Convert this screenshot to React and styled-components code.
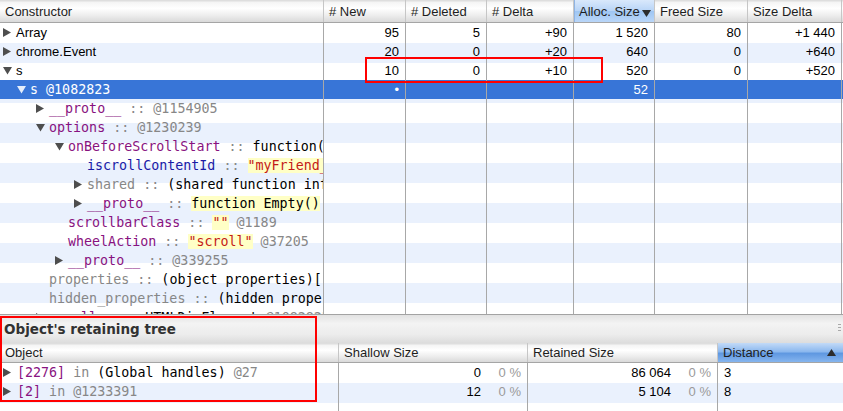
import React from 'react';
import styled, { createGlobalStyle, css } from 'styled-components';

const SANS = `"Liberation Sans", Arial, sans-serif`;
const MONO = `"DejaVu Sans Mono", "Liberation Mono", monospace`;

const GlobalStyle = createGlobalStyle`
  html, body { margin: 0; padding: 0; background: #fff; overflow: hidden; }
  body { font-family: ${SANS}; font-size: 13px; color: #000; }
  #root { width: 843px; height: 411px; }
`;

const TOP_COLS = '324px 82px 81px 87px 81px 93px 94px 1fr';
const BOTTOM_COLS = '339px 189px 190px 1fr';
const INDENT = [3, 17, 36, 55, 74];

const Page = styled.div`
  position: relative;
  width: 843px;
  height: 411px;
  display: flex;
  flex-direction: column;
  overflow: hidden;
`;

const TopGrid = styled.section`
  flex: none;
  height: 315px;
  box-sizing: border-box;
  border-bottom: 1px solid #a3a3a3;
  display: flex;
  flex-direction: column;
  overflow: hidden;
`;

const HeaderRow = styled.div`
  flex: none;
  display: grid;
  grid-template-columns: ${p => p.$cols};
  height: ${p => p.$h}px;
  box-sizing: border-box;
  border-bottom: 1px solid #a5a5a5;
  background: linear-gradient(to bottom, #dedede 0, #dedede 1px, #f4f4f4 2px, #ffffff 38%, #ececec 72%, #d9d9d9 100%);
`;

const sortedLight = css`
  background: linear-gradient(to bottom, #d9e8fb 0%, #b9d5f7 48%, #9fc6f3 52%, #b9d6f8 100%);
  box-shadow: inset 1px 0 0 #8fb4e4;
`;

const sortedStrong = css`
  background: linear-gradient(to bottom, #c2daf7 0%, #8cb8ee 45%, #5f98e1 55%, #86b5ee 100%);
`;

const HeaderCell = styled.div`
  position: relative;
  display: flex;
  align-items: center;
  padding: 0 5px;
  box-sizing: border-box;
  border-right: 1px solid ${p => (p.$last ? 'transparent' : '#c6c6c6')};
  font-family: ${SANS};
  font-size: 13px;
  color: #1e1e1e;
  white-space: nowrap;
  overflow: hidden;
  ${p => p.$sorted === 'light' && sortedLight}
  ${p => p.$sorted === 'strong' && sortedStrong}
`;

const SortMark = styled.svg`
  position: absolute;
  right: ${p => p.$right}px;
  top: ${p => p.$top}px;
  fill: #2c2c2c;
`;

const Body = styled.div`
  flex: 1;
  display: flex;
  flex-direction: column;
  overflow: hidden;
  background: repeating-linear-gradient(to bottom, #ffffff 0, #ffffff 20px, #eaf1fd 20px, #eaf1fd 40px);
`;

const Row = styled.div`
  flex: ${p => (p.$fill ? '1' : 'none')};
  display: grid;
  grid-template-columns: ${p => p.$cols};
  height: ${p => (p.$fill ? 'auto' : '19px')};
  background: ${p => (p.$selected ? '#3875d7' : 'transparent')};
  color: ${p => (p.$selected ? '#fff' : '#000')};
`;

const Cell = styled.div`
  display: flex;
  align-items: center;
  justify-content: ${p => (p.$align === 'left' ? 'flex-start' : 'flex-end')};
  padding: 0 6px;
  box-sizing: border-box;
  border-right: 1px solid ${p => (p.$last ? 'transparent' : '#a8a8a8')};
  font-family: ${SANS};
  font-size: 13px;
  white-space: nowrap;
  overflow: hidden;
`;

const TreeCell = styled.div`
  display: flex;
  align-items: center;
  padding-left: ${p => p.$indent}px;
  box-sizing: border-box;
  border-right: 1px solid #a8a8a8;
  font-family: ${p => (p.$sans ? SANS : MONO)};
  font-size: ${p => (p.$sans ? '13px' : '13.33px')};
  white-space: pre;
  overflow: hidden;
`;

const ToggleBox = styled.span`
  flex: none;
  width: ${p => p.$w}px;
  display: flex;
  align-items: center;
  svg { fill: ${p => (p.$light ? '#e4edfb' : '#4e4e4e')}; }
`;

const NAME_COLORS = { prop: '#881280', closure: '#1a1aa6', internal: '#878787' };

const Name = styled.span`
  color: ${p => (p.$sel ? '#fff' : NAME_COLORS[p.$tone])};
`;

const Sep = styled.span`
  color: ${p => (p.$sel ? '#fff' : '#878787')};
`;

const Val = styled.span`
  color: ${p => (p.$sel ? '#fff' : p.$str ? '#c41a16' : '#000')};
  background: ${p => (p.$hl ? '#ffffc6' : 'transparent')};
`;

const Num = styled.span``;

const Pct = styled.span`
  width: 40px;
  text-align: right;
  color: #9a9a9a;
`;

const TitleBar = styled.div`
  flex: none;
  position: relative;
  height: 28px;
  display: flex;
  align-items: center;
  padding-left: 4px;
  background: linear-gradient(to bottom, #e2e2e2 0%, #f3f3f3 30%, #ececec 70%, #dcdcdc 100%);
  font-family: "DejaVu Sans", "Liberation Sans", sans-serif;
  font-weight: bold;
  font-size: 13.5px;
  color: #323232;
`;

const Grip = styled.svg`
  position: absolute;
  right: 1px;
  top: 9px;
  fill: #a9a9a9;
`;

const RedBox = styled.div`
  position: absolute;
  left: ${p => p.$x}px;
  top: ${p => p.$y}px;
  width: ${p => p.$w}px;
  height: ${p => p.$h}px;
  box-sizing: border-box;
  border: 2px solid #ff0000;
  pointer-events: none;
`;

function Toggle({ dir, light, w = 13 }) {
  return (
    <ToggleBox $w={w} $light={light}>
      {dir === 'right' && (
        <svg width="8" height="9" viewBox="0 0 8 9"><polygon points="0,0 8,4.5 0,9" /></svg>
      )}
      {dir === 'down' && (
        <svg width="9" height="8" viewBox="0 0 9 8"><polygon points="0,0 9,0 4.5,7.5" /></svg>
      )}
    </ToggleBox>
  );
}

function TreeText({ parts, sel }) {
  return parts.map(([kind, text], i) => {
    if (kind === 'prop' || kind === 'closure' || kind === 'internal')
      return <Name key={i} $tone={kind} $sel={sel}>{text}</Name>;
    if (kind === 'sep' || kind === 'id') return <Sep key={i} $sel={sel}>{text}</Sep>;
    if (kind === 'str') return <Val key={i} $str $hl $sel={sel}>{text}</Val>;
    if (kind === 'hl') return <Val key={i} $hl $sel={sel}>{text}</Val>;
    return <Val key={i} $sel={sel}>{text}</Val>;
  });
}

const S = ' :: ';

const topRows = [
  { level: 0, dir: 'right', sans: 'Array', nums: ['95', '5', '+90', '1\u00a0520', '80', '+1\u00a0440'] },
  { level: 0, dir: 'right', sans: 'chrome.Event', nums: ['20', '0', '+20', '640', '0', '+640'] },
  { level: 0, dir: 'down', sans: 's', nums: ['10', '0', '+10', '520', '0', '+520'] },
  { level: 1, dir: 'down', selected: true, parts: [['val', 's'], ['id', ' @1082823']], nums: ['•', '', '', '52', '', ''] },
  { level: 2, dir: 'right', parts: [['prop', '__proto__'], ['sep', S], ['id', '@1154905']] },
  { level: 2, dir: 'down', parts: [['prop', 'options'], ['sep', S], ['id', '@1230239']] },
  { level: 3, dir: 'down', parts: [['prop', 'onBeforeScrollStart'], ['sep', S], ['val', 'function() {}']] },
  { level: 4, parts: [['closure', 'iscrollContentId'], ['sep', S], ['str', '"myFriend_scroll"']] },
  { level: 4, dir: 'right', parts: [['internal', 'shared'], ['sep', S], ['val', '(shared function info)']] },
  { level: 4, dir: 'right', parts: [['prop', '__proto__'], ['sep', S], ['hl', 'function Empty()'], ['val', ' {}']] },
  { level: 3, parts: [['prop', 'scrollbarClass'], ['sep', S], ['str', '""'], ['id', ' @1189']] },
  { level: 3, parts: [['prop', 'wheelAction'], ['sep', S], ['str', '"scroll"'], ['id', ' @37205']] },
  { level: 3, dir: 'right', parts: [['prop', '__proto__'], ['sep', S], ['id', '@339255']] },
  { level: 2, parts: [['internal', 'properties'], ['sep', S], ['val', '(object properties)[]']] },
  { level: 2, parts: [['internal', 'hidden_properties'], ['sep', S], ['val', '(hidden properties)[]']] },
  { level: 2, dir: 'right', parts: [['prop', 'scroller'], ['sep', S], ['val', 'HTMLDivElement'], ['id', ' @1082823']] },
];

const topHeaders = ['Constructor', '# New', '# Deleted', '# Delta', 'Alloc. Size', 'Freed Size', 'Size Delta'];

const bottomRows = [
  { parts: [['prop', '[2276]'], ['id', ' in '], ['val', '(Global handles)'], ['id', ' @27']], shallow: '0', retained: '86\u00a0064', distance: '3' },
  { parts: [['prop', '[2]'], ['id', ' in '], ['id', '@1233391']], shallow: '12', retained: '5\u00a0104', distance: '8' },
];

export default function App() {
  return (
    <Page>
      <GlobalStyle />
      <TopGrid>
        <HeaderRow $cols={TOP_COLS} $h={23}>
          {topHeaders.map(h => (
            <HeaderCell key={h} $sorted={h === 'Alloc. Size' ? 'light' : undefined}>
              {h}
              {h === 'Alloc. Size' && (
                <SortMark $right={3} $top={10} width="9" height="7" viewBox="0 0 9 7">
                  <polygon points="0,0 9,0 4.5,7" />
                </SortMark>
              )}
            </HeaderCell>
          ))}
          <HeaderCell $last />
        </HeaderRow>
        <Body>
          {topRows.map((r, i) => (
            <Row key={i} $cols={TOP_COLS} $selected={r.selected}>
              <TreeCell $indent={INDENT[r.level]} $sans={!!r.sans}>
                <Toggle dir={r.dir} light={r.selected} />
                {r.sans ? r.sans : <TreeText parts={r.parts} sel={r.selected} />}
              </TreeCell>
              {(r.nums || ['', '', '', '', '', '']).map((n, j) => (
                <Cell key={j}>{n}</Cell>
              ))}
              <Cell $last />
            </Row>
          ))}
          <Row $fill $cols={TOP_COLS}>
            <TreeCell $indent={0} />
            {[0, 1, 2, 3, 4, 5].map(j => <Cell key={j} />)}
            <Cell $last />
          </Row>
        </Body>
      </TopGrid>

      <TitleBar>
        Object's retaining tree
        <Grip width="4" height="10" viewBox="0 0 4 10">
          <rect x="0" y="0" width="3" height="1" />
          <rect x="0" y="3" width="3" height="1" />
          <rect x="0" y="6" width="3" height="1" />
        </Grip>
      </TitleBar>
      <HeaderRow $cols={BOTTOM_COLS} $h={20}>
        <HeaderCell>Object</HeaderCell>
        <HeaderCell>Shallow Size</HeaderCell>
        <HeaderCell>Retained Size</HeaderCell>
        <HeaderCell $sorted="strong" $last>
          Distance
          <SortMark $right={6} $top={6} width="9" height="7" viewBox="0 0 9 7">
            <polygon points="4.5,0 9,7 0,7" />
          </SortMark>
        </HeaderCell>
      </HeaderRow>
      <Body>
        {bottomRows.map((r, i) => (
          <Row key={i} $cols={BOTTOM_COLS}>
            <TreeCell $indent={3}>
              <Toggle dir="right" w={14} />
              <TreeText parts={r.parts} />
            </TreeCell>
            <Cell>
              <Num>{r.shallow}</Num>
              <Pct>0 %</Pct>
            </Cell>
            <Cell>
              <Num>{r.retained}</Num>
              <Pct>0 %</Pct>
            </Cell>
            <Cell $align="left" $last>{r.distance}</Cell>
          </Row>
        ))}
        <Row $fill $cols={BOTTOM_COLS}>
          <TreeCell $indent={0} />
          <Cell />
          <Cell />
          <Cell $last />
        </Row>
      </Body>

      <RedBox $x={365} $y={57} $w={238} $h={26} />
      <RedBox $x={0} $y={316} $w={317} $h={86} />
    </Page>
  );
}
